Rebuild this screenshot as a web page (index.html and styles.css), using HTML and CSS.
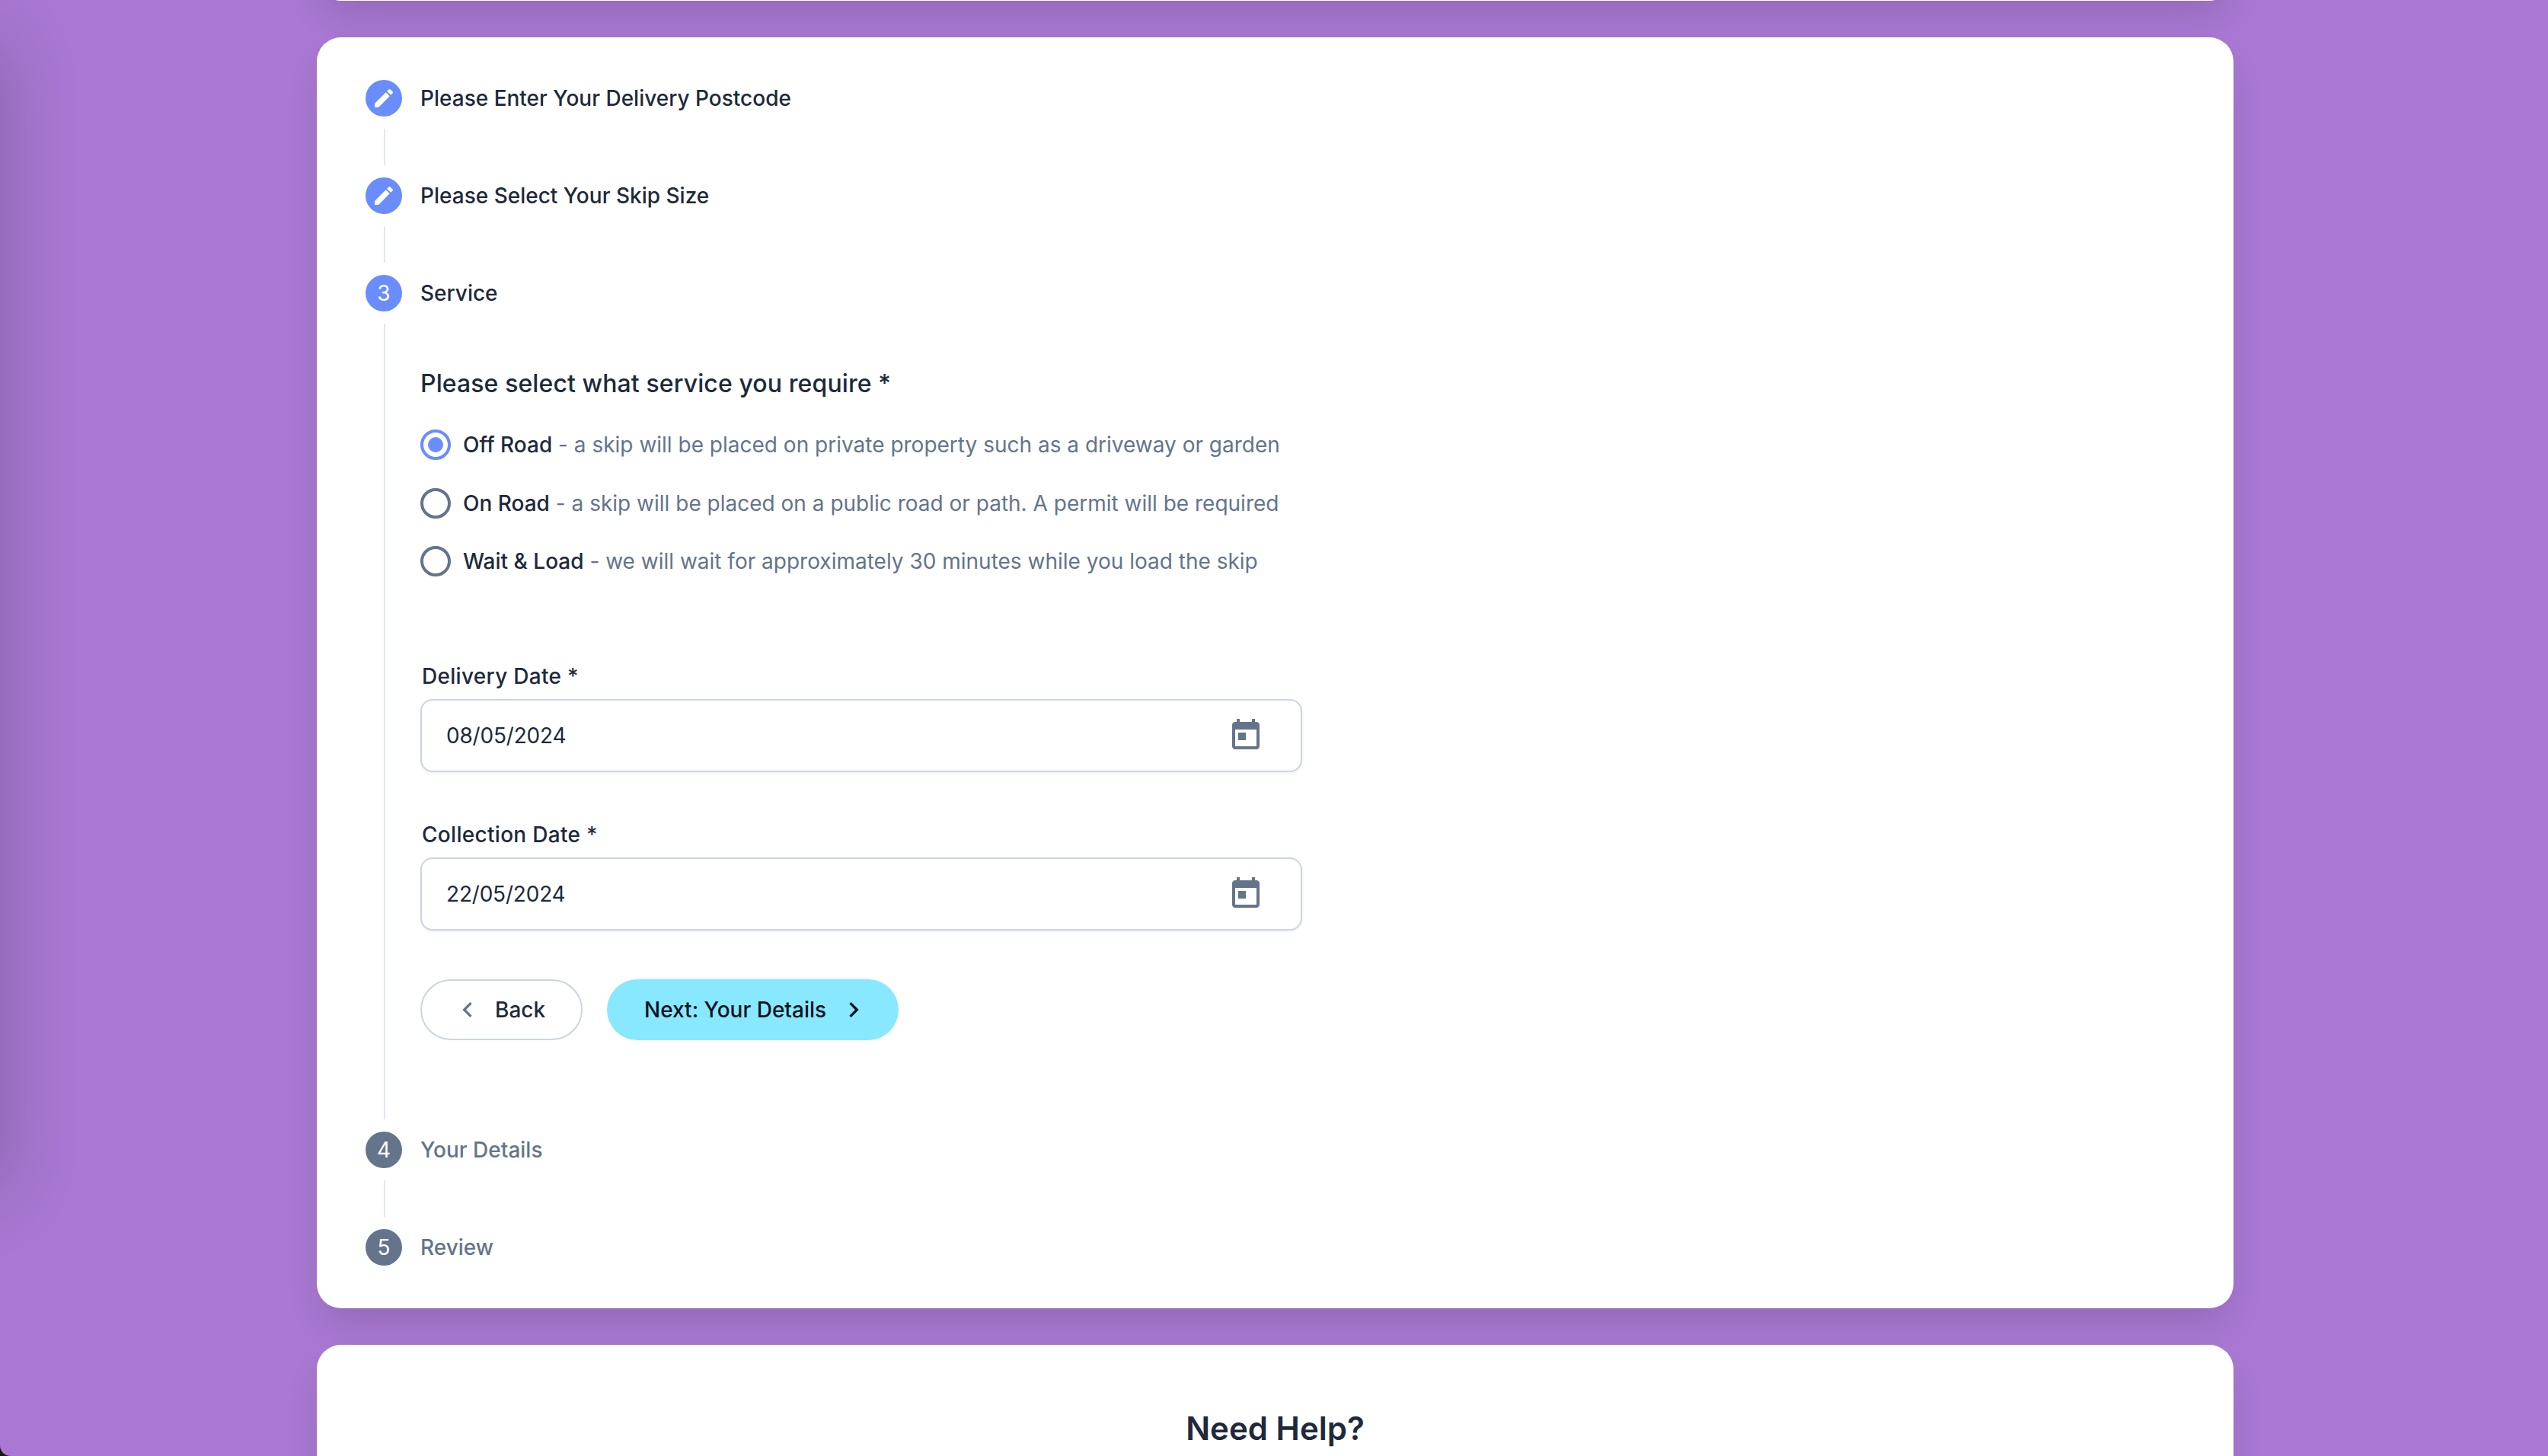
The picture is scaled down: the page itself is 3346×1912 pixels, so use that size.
FILE: index.html
```html
<!DOCTYPE html>
<html lang="en">
<head>
<meta charset="utf-8">
<title>Service</title>
<link rel="stylesheet" href="styles.css">
</head>
<body>
<div class="viewport">
  <div class="offcanvas-shadow"></div>
  <div class="card card-prev"></div>
  <main class="card card-stepper">
    <div class="step">
      <span class="step-icon"><svg viewBox="0 0 24 24"><path d="M3 17.25V21h3.75L17.81 9.94l-3.75-3.75L3 17.25zM20.71 7.04c.39-.39.39-1.02 0-1.41l-2.34-2.34a.9959.9959 0 0 0-1.41 0l-1.83 1.83 3.75 3.75 1.83-1.83z"/></svg></span>
      <span class="step-label">Please Enter Your Delivery Postcode</span>
    </div>
    <div class="connector"></div>
    <div class="step">
      <span class="step-icon"><svg viewBox="0 0 24 24"><path d="M3 17.25V21h3.75L17.81 9.94l-3.75-3.75L3 17.25zM20.71 7.04c.39-.39.39-1.02 0-1.41l-2.34-2.34a.9959.9959 0 0 0-1.41 0l-1.83 1.83 3.75 3.75 1.83-1.83z"/></svg></span>
      <span class="step-label">Please Select Your Skip Size</span>
    </div>
    <div class="connector"></div>
    <div class="step">
      <span class="step-icon">3</span>
      <span class="step-label">Service</span>
    </div>
    <section class="step-content">
      <h2 class="question">Please select what service you require *</h2>
      <div class="radio-group">
        <div class="radio-row">
          <span class="radio radio-checked"></span>
          <span class="radio-text"><b class="radio-name">Off Road</b> - a skip will be placed on private property such as a driveway or garden</span>
        </div>
        <div class="radio-row">
          <span class="radio"></span>
          <span class="radio-text"><b class="radio-name">On Road</b> - a skip will be placed on a public road or path. A permit will be required</span>
        </div>
        <div class="radio-row">
          <span class="radio"></span>
          <span class="radio-text"><b class="radio-name">Wait &amp; Load</b> - we will wait for approximately 30 minutes while you load the skip</span>
        </div>
      </div>
      <div class="field field-first">
        <div class="field-label">Delivery Date *</div>
        <div class="date-input">
          <span class="date-value">08/05/2024</span>
          <svg class="date-icon" viewBox="0 0 24 24"><path d="M19 3h-1V1h-2v2H8V1H6v2H5c-1.11 0-1.99.9-1.99 2L3 19c0 1.1.89 2 2 2h14c1.1 0 2-.9 2-2V5c0-1.1-.9-2-2-2zm0 16H5V8h14v11zM7 10h5v5H7z"/></svg>
        </div>
      </div>
      <div class="field">
        <div class="field-label">Collection Date *</div>
        <div class="date-input">
          <span class="date-value">22/05/2024</span>
          <svg class="date-icon" viewBox="0 0 24 24"><path d="M19 3h-1V1h-2v2H8V1H6v2H5c-1.11 0-1.99.9-1.99 2L3 19c0 1.1.89 2 2 2h14c1.1 0 2-.9 2-2V5c0-1.1-.9-2-2-2zm0 16H5V8h14v11zM7 10h5v5H7z"/></svg>
        </div>
      </div>
      <div class="actions">
        <button class="btn btn-back" type="button">
          <svg class="btn-icon" viewBox="0 0 24 24"><path d="M15.41 7.41 14 6l-6 6 6 6 1.41-1.41L10.83 12z"/></svg>
          <span>Back</span>
        </button>
        <button class="btn btn-next" type="button">
          <span>Next: Your Details</span>
          <svg class="btn-icon" viewBox="0 0 24 24"><path d="M10 6 8.59 7.41 13.17 12l-4.58 4.58L10 18l6-6z"/></svg>
        </button>
      </div>
    </section>
    <div class="step step-pending">
      <span class="step-icon">4</span>
      <span class="step-label">Your Details</span>
    </div>
    <div class="connector"></div>
    <div class="step step-pending">
      <span class="step-icon">5</span>
      <span class="step-label">Review</span>
    </div>
  </main>
  <section class="card card-help">
    <h2 class="help-title">Need Help?</h2>
  </section>
</div>
</body>
</html>
```

FILE: styles.css
```css
* { box-sizing: border-box; }

html { background: #1a1a0a; }

body {
  margin: 0;
  font-family: "Inter", "Liberation Sans", sans-serif;
  color: #1e293b;
}

.viewport {
  position: relative;
  height: 1912px;
  overflow: hidden;
  padding: 0 413px 0 416px;
  background: #a878d2;
  border-bottom-left-radius: 14px;
}

.offcanvas-shadow {
  position: absolute;
  left: -100px;
  top: 60px;
  width: 100px;
  height: 1500px;
  box-shadow: 0 0 100px rgba(0, 0, 0, 0.22);
}

.card {
  position: relative;
  background: #fff;
  border-radius: 32px;
  box-shadow: 0 25px 50px -12px rgba(0, 0, 0, 0.15);
}

.card-prev {
  height: 80px;
  margin-top: -79px;
  margin-bottom: 48px;
}

.card-stepper {
  height: 1669px;
  padding: 56px 64px;
  margin-bottom: 48px;
}

.step {
  display: flex;
  align-items: center;
  gap: 24px;
  height: 48px;
}

.step-icon {
  flex: none;
  display: flex;
  align-items: center;
  justify-content: center;
  width: 48px;
  height: 48px;
  border-radius: 50%;
  background: #6a8dfb;
  color: #fff;
  font-size: 28px;
  font-weight: 400;
}

.step-icon svg {
  width: 32px;
  height: 32px;
  fill: #fff;
}

.step-label {
  font-size: 28px;
  font-weight: 500;
}

.step-pending .step-icon { background: #64748b; }
.step-pending .step-label { color: #64748b; }

.connector {
  width: 2px;
  height: 48px;
  margin: 16px 0 16px 24px;
  background: #e2e8f0;
}

.step-content {
  width: 1206px;
  margin: 16px 0 16px 24px;
  padding: 59px 0 104px 46px;
  border-left: 2px solid #e2e8f0;
}

.question {
  margin: 0 0 40px;
  font-size: 32px;
  line-height: 40px;
  font-weight: 500;
  letter-spacing: 0.1px;
}

.radio-group {
  display: flex;
  flex-direction: column;
  gap: 36.5px;
}

.radio-row {
  display: flex;
  align-items: center;
  gap: 16px;
  height: 40px;
}

.radio {
  flex: none;
  width: 40px;
  height: 40px;
  display: flex;
  align-items: center;
  justify-content: center;
  border: 4px solid #64748b;
  border-radius: 50%;
}

.radio-checked { border-color: #6a8dfb; }

.radio-checked::after {
  content: "";
  width: 20px;
  height: 20px;
  border-radius: 50%;
  background: #6a8dfb;
}

.radio-text {
  font-size: 28px;
  font-weight: 400;
  letter-spacing: 0;
  color: #64748b;
}

.radio-name {
  font-weight: 500;
  color: #1e293b;
}

.field { margin-top: 62px; }
.field-first { margin-top: 111px; }

.field-label {
  padding-left: 2px;
  margin-bottom: 10px;
  font-size: 28px;
  line-height: 40px;
  font-weight: 500;
  letter-spacing: 0.3px;
}

.date-input {
  display: flex;
  align-items: center;
  justify-content: space-between;
  height: 96px;
  padding: 0 48px 0 32px;
  background: #fff;
  border: 2px solid #cbd5e1;
  border-radius: 16px;
  box-shadow: 0 2px 4px rgba(0, 0, 0, 0.05);
}

.date-value {
  font-size: 28px;
  letter-spacing: -0.2px;
}

.date-icon {
  width: 48px;
  height: 48px;
  fill: #64748b;
}

.actions {
  display: flex;
  gap: 32px;
  margin-top: 64px;
}

.btn {
  display: flex;
  align-items: center;
  gap: 16px;
  height: 80px;
  border-radius: 40px;
  font-family: inherit;
  font-size: 28px;
  font-weight: 500;
}

.btn-icon {
  flex: none;
  width: 40px;
  height: 40px;
}

.btn-back {
  width: 213px;
  padding: 0 0 0 40px;
  background: #fff;
  border: 2px solid #cbd5e1;
  color: #1e293b;
}

.btn-back .btn-icon { fill: #64748b; }

.btn-next {
  width: 383px;
  padding: 0 0 0 49px;
  background: #88e8fd;
  border: 0;
  color: #0b1220;
}

.btn-next .btn-icon { fill: #0b1220; }

.card-help {
  height: 400px;
  padding-top: 82px;
}

.help-title {
  margin: 0;
  text-align: center;
  font-size: 42px;
  line-height: 56px;
  font-weight: 600;
  color: #1e293b;
}
```
